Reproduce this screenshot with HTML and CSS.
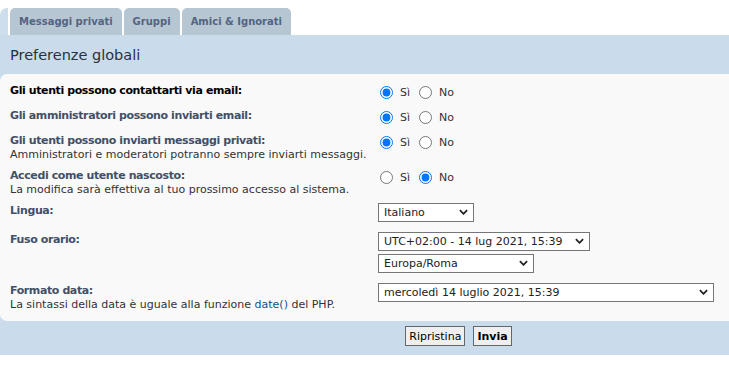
FILE: index.html
```html
<!DOCTYPE html>
<html lang="it">
<head>
    <meta charset="UTF-8">
    <title>Pannello di controllo utente</title>
    <link rel="stylesheet" href="styles.css">
</head>
<body>
    <div class="tabs">
        <span class="tab-stub"></span>
        <a class="tab">Messaggi privati</a>
        <a class="tab">Gruppi</a>
        <a class="tab">Amici &amp; Ignorati</a>
    </div>

    <div class="panel">
        <h2 class="panel-title">Preferenze globali</h2>

        <div class="fieldset">
            <div class="row row-radio">
                <div class="label"><span class="hl">Gli utenti possono contattarti via email:</span></div>
                <div class="control">
                    <label class="opt"><input type="radio" name="email" checked> Sì</label>
                    <label class="opt"><input type="radio" name="email"> No</label>
                </div>
            </div>
            <div class="row row-radio">
                <div class="label"><span>Gli amministratori possono inviarti email:</span></div>
                <div class="control">
                    <label class="opt"><input type="radio" name="massemail" checked> Sì</label>
                    <label class="opt"><input type="radio" name="massemail"> No</label>
                </div>
            </div>
            <div class="row row-two">
                <div class="label">
                    <span>Gli utenti possono inviarti messaggi privati:</span>
                    <div class="explain">Amministratori e moderatori potranno sempre inviarti messaggi.</div>
                </div>
                <div class="control">
                    <label class="opt"><input type="radio" name="pm" checked> Sì</label>
                    <label class="opt"><input type="radio" name="pm"> No</label>
                </div>
            </div>
            <div class="row row-two">
                <div class="label">
                    <span>Accedi come utente nascosto:</span>
                    <div class="explain">La modifica sarà effettiva al tuo prossimo accesso al sistema.</div>
                </div>
                <div class="control">
                    <label class="opt"><input type="radio" name="hide"> Sì</label>
                    <label class="opt"><input type="radio" name="hide" checked> No</label>
                </div>
            </div>
            <div class="row row-select">
                <div class="label"><span>Lingua:</span></div>
                <div class="control">
                    <span class="select w-lang">
                        <select><option>Italiano</option></select>
                        <svg class="chev" viewBox="0 0 10 6"><path d="M1 1l4 4 4-4" /></svg>
                    </span>
                </div>
            </div>
            <div class="row row-select">
                <div class="label"><span>Fuso orario:</span></div>
                <div class="control control-stack">
                    <span class="select w-tz">
                        <select><option>UTC+02:00 - 14 lug 2021, 15:39</option></select>
                        <svg class="chev" viewBox="0 0 10 6"><path d="M1 1l4 4 4-4" /></svg>
                    </span>
                    <span class="select w-zone">
                        <select><option>Europa/Roma</option></select>
                        <svg class="chev" viewBox="0 0 10 6"><path d="M1 1l4 4 4-4" /></svg>
                    </span>
                </div>
            </div>
            <div class="row">
                <div class="label">
                    <span>Formato data:</span>
                    <div class="explain">La sintassi della data è uguale alla funzione <a class="link">date()</a> del PHP.</div>
                </div>
                <div class="control">
                    <span class="select w-date">
                        <select><option>mercoledì 14 luglio 2021, 15:39</option></select>
                        <svg class="chev" viewBox="0 0 10 6"><path d="M1 1l4 4 4-4" /></svg>
                    </span>
                </div>
            </div>
        </div>

        <div class="submit-buttons">
            <button class="button2">Ripristina</button>
            <button class="button1">Invia</button>
        </div>
    </div>
</body>
</html>
```

FILE: styles.css
```css
* { margin: 0; padding: 0; box-sizing: border-box; }
body {
    font-family: "DejaVu Sans", Verdana, sans-serif;
    font-size: 11px;
    color: #333;
    background: #fff;
}
.tabs {
    display: flex;
    gap: 2px;
    padding-top: 8px;
    height: 35px;
    align-items: stretch;
}
.tab-stub {
    width: 8px;
    background: #cfdeec;
    border-top-left-radius: 7px;
}
.tab {
    display: flex;
    align-items: center;
    padding: 0 9px;
    background: #b7c6d3;
    color: #536482;
    font-weight: bold;
    font-size: 10px;
    border-radius: 5px 5px 0 0;
    text-decoration: none;
}
.panel {
    background: #cadceb;
    padding-bottom: 9px;
}
.panel-title {
    font-size: 14.5px;
    font-weight: normal;
    color: #28313f;
    padding: 12px 0 0 10px;
    height: 39px;
}
.fieldset {
    background: #f9f9f9;
    border-radius: 7px 0 0 7px;
    padding: 9px 0 10px 10px;
}
.row {
    display: flex;
    align-items: flex-start;
}
.row-radio { margin-bottom: 6px; }
.row-two { margin-bottom: 7px; }
.row-select { margin-bottom: 10px; }
.label {
    width: 367px;
    color: #425067;
    font-weight: bold;
    line-height: 13.5px;
    padding-top: 1px;
}
.label > span { letter-spacing: -0.4px; }
.label .hl { color: #000; }
.explain {
    font-weight: normal;
    color: #333;
}
.link { color: #105289; text-decoration: none; }
.control {
    display: flex;
    align-items: center;
    color: #333;
}
.control-stack {
    flex-direction: column;
    align-items: flex-start;
    gap: 3px;
}
.opt {
    display: flex;
    align-items: center;
    margin-right: 6px;
    font-size: 11px;
}
.opt input {
    width: 13px;
    height: 13px;
    margin: 3px 7px 3px 3px;
    accent-color: #0075ff;
}
.select {
    position: relative;
    display: inline-block;
    margin-left: 1px;
}
.select select {
    appearance: none;
    -webkit-appearance: none;
    font-family: "DejaVu Sans", Verdana, sans-serif;
    font-size: 11px;
    color: #222;
    background: #fff;
    border: 1px solid #767676;
    border-radius: 0;
    height: 19px;
    padding: 0 0 0 5px;
    width: 100%;
}
.chev {
    position: absolute;
    right: 6px;
    top: 6px;
    width: 9px;
    height: 6px;
    fill: none;
    stroke: #222;
    stroke-width: 2;
    pointer-events: none;
}
.w-lang { width: 96px; }
.w-tz { width: 212px; }
.w-zone { width: 156px; }
.w-date { width: 336px; }
.submit-buttons {
    display: flex;
    justify-content: center;
    gap: 8px;
    padding-top: 5px;
    padding-left: 188px;
}
.submit-buttons button {
    font-family: "DejaVu Sans", Verdana, sans-serif;
    font-size: 11px;
    color: #000;
    background: #efefef;
    border: 1px solid #666;
    height: 20px;
    padding: 0 3px;
}
.button1 { font-weight: bold; padding: 0 4px; }
```
